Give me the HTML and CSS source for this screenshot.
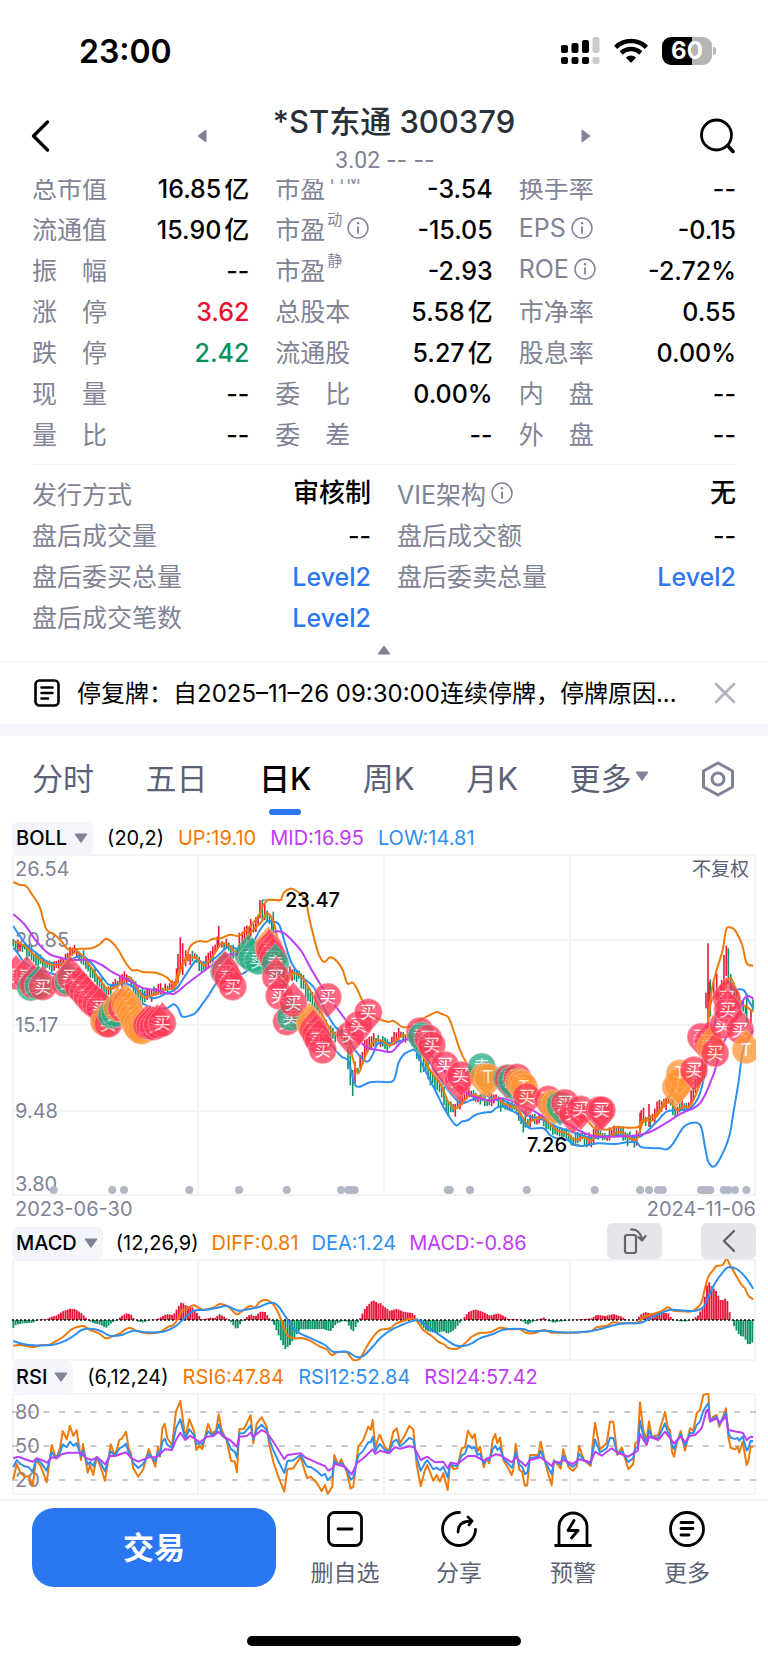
FILE: index.html
```html
<!DOCTYPE html>
<html lang="zh-CN">
<head>
    <meta charset="UTF-8">
    <meta name="viewport" content="width=device-width, initial-scale=1.0">
    <title>*ST东通 300379</title>
    <link rel="stylesheet" href="styles.css">
</head>
<body>
    <div class="status-bar">
        <span class="clock">23:00</span>
        <div class="status-icons">
            <svg width="39" height="28" viewBox="0 0 39 28">
                <g fill="#000">
                    <rect x="0" y="8" width="7" height="8" rx="2"/>
                    <rect x="10.5" y="6" width="7" height="10" rx="2"/>
                    <rect x="21" y="3" width="7" height="13" rx="2"/>
                    <rect x="0" y="20" width="7" height="7" rx="2"/>
                    <rect x="10.5" y="20" width="7" height="7" rx="2"/>
                    <rect x="21" y="20" width="7" height="7" rx="2"/>
                </g>
                <g fill="#ccc">
                    <rect x="31.5" y="0" width="7" height="16" rx="2"/>
                    <rect x="31.5" y="20" width="7" height="7" rx="2"/>
                </g>
            </svg>
            <svg width="34" height="26" viewBox="0 0 34 26">
                <g fill="none" stroke="#000" stroke-width="4.6">
                    <path d="M1.6 9.3 A22 22 0 0 1 32.4 9.3"/>
                    <path d="M7.2 15 A14 14 0 0 1 26.8 15"/>
                </g>
                <path d="M12 19.6 A7.2 7.2 0 0 1 22 19.6 L17.8 24.2 Q17 25 16.2 24.2 Z"/>
            </svg>
            <div class="battery"><span class="battery-level">60</span></div>
        </div>
    </div>

    <header class="header">
        <button class="icon-btn back" aria-label="返回">
            <svg width="20" height="34" viewBox="0 0 20 34"><path d="M16.5 3 L2.5 17 L16.5 31" fill="none" stroke="#000" stroke-width="3.4" stroke-linecap="round" stroke-linejoin="round"/></svg>
        </button>
        <div class="stock-nav">
            <button class="icon-btn" aria-label="上一只">
                <svg width="10" height="14" viewBox="0 0 10 14"><path d="M9 1 V13 L1 7 Z" fill="#7f8395" stroke="#7f8395" stroke-linejoin="round"/></svg>
            </button>
            <div class="stock">
                <h1>*ST东通 300379</h1>
                <p>3.02 <span>-- --</span></p>
            </div>
            <button class="icon-btn" aria-label="下一只">
                <svg width="10" height="14" viewBox="0 0 10 14"><path d="M1 1 V13 L9 7 Z" fill="#7f8395" stroke="#7f8395" stroke-linejoin="round"/></svg>
            </button>
        </div>
        <button class="icon-btn search" aria-label="搜索">
            <svg width="36" height="36" viewBox="0 0 36 36"><g fill="none" stroke="#000" stroke-width="2.8" stroke-linecap="round"><circle cx="16.5" cy="17" r="15"/><path d="M28 28 L33 33.5" stroke-width="3.6"/></g></svg>
        </button>
    </header>

    <main>
        <section class="quote">
            <dl class="grid three">
                <div><dt>总市值</dt><dd>16.85<i>亿</i></dd></div>
                <div><dt>市盈<sup>TTM</sup></dt><dd>-3.54</dd></div>
                <div><dt>换手率</dt><dd>--</dd></div>
                <div><dt>流通值</dt><dd>15.90<i>亿</i></dd></div>
                <div><dt>市盈<sup>动</sup><svg class="info"><use href="#info"/></svg></dt><dd>-15.05</dd></div>
                <div><dt>EPS<svg class="info"><use href="#info"/></svg></dt><dd>-0.15</dd></div>
                <div><dt>振　幅</dt><dd>--</dd></div>
                <div><dt>市盈<sup>静</sup></dt><dd>-2.93</dd></div>
                <div><dt>ROE<svg class="info"><use href="#info"/></svg></dt><dd>-2.72%</dd></div>
                <div><dt>涨　停</dt><dd class="up">3.62</dd></div>
                <div><dt>总股本</dt><dd>5.58<i>亿</i></dd></div>
                <div><dt>市净率</dt><dd>0.55</dd></div>
                <div><dt>跌　停</dt><dd class="down">2.42</dd></div>
                <div><dt>流通股</dt><dd>5.27<i>亿</i></dd></div>
                <div><dt>股息率</dt><dd>0.00%</dd></div>
                <div><dt>现　量</dt><dd>--</dd></div>
                <div><dt>委　比</dt><dd>0.00%</dd></div>
                <div><dt>内　盘</dt><dd>--</dd></div>
                <div><dt>量　比</dt><dd>--</dd></div>
                <div><dt>委　差</dt><dd>--</dd></div>
                <div><dt>外　盘</dt><dd>--</dd></div>
            </dl>
            <dl class="grid two">
                <div><dt>发行方式</dt><dd class="word">审核制</dd></div>
                <div><dt>VIE架构<svg class="info"><use href="#info"/></svg></dt><dd class="word">无</dd></div>
                <div><dt>盘后成交量</dt><dd>--</dd></div>
                <div><dt>盘后成交额</dt><dd>--</dd></div>
                <div><dt>盘后委买总量</dt><dd><a href="#level2">Level2</a></dd></div>
                <div><dt>盘后委卖总量</dt><dd><a href="#level2">Level2</a></dd></div>
                <div><dt>盘后成交笔数</dt><dd><a href="#level2">Level2</a></dd></div>
            </dl>
            <button class="collapse" aria-label="收起">
                <svg width="14" height="10" viewBox="0 0 14 10"><path d="M7 1 L13 9 H1 Z" fill="#7f8395" stroke="#7f8395" stroke-linejoin="round"/></svg>
            </button>
        </section>

        <section class="notice">
            <svg width="26" height="28" viewBox="0 0 26 28"><g fill="none" stroke="#000" stroke-width="2.6" stroke-linecap="round"><rect x="1.5" y="1.5" width="23" height="25" rx="4"/><path d="M7.5 8.5 H18.5 M7.5 14 H18.5 M7.5 19.5 H14"/></g></svg>
            <p>停复牌：自2025–11–26 09:30:00连续停牌，停牌原因...</p>
            <button class="icon-btn" aria-label="关闭">
                <svg width="22" height="22" viewBox="0 0 22 22"><path d="M2 2 L20 20 M20 2 L2 20" fill="none" stroke="#b0b5c3" stroke-width="2.8" stroke-linecap="round"/></svg>
            </button>
        </section>

        <nav class="tabs">
            <button>分时</button>
            <button>五日</button>
            <button class="active">日K</button>
            <button>周K</button>
            <button>月K</button>
            <button>更多<svg width="14" height="11" viewBox="0 0 14 11"><use href="#caret"/></svg></button>
            <button class="settings" aria-label="设置">
                <svg width="34" height="36" viewBox="0 0 34 36"><g fill="none" stroke="#7f8395" stroke-width="3" stroke-linejoin="round"><path d="M17 2 L31.5 10 V26 L17 34 L2.5 26 V10 Z"/><circle cx="17" cy="18" r="6"/></g></svg>
            </button>
        </nav>

        <section class="charts">
            <div class="legend">
                <button class="chip">BOLL<svg class="caret"><use href="#caret"/></svg></button>
                <span>(20,2)</span>
                <span class="orange">UP:19.10</span>
                <span class="purple">MID:16.95</span>
                <span class="blue">LOW:14.81</span>
            </div>
            <svg class="chart" viewBox="0 0 744 342">
                <path class="frame" d="M1 1 H743 V341 H1 Z M186 0 V342 M372 0 V342 M558 0 V342 M0 86 H744 M0 171 H744 M0 257 H744"/>
                <g class="axis">
                    <text x="3" y="22">26.54</text>
                    <text x="3" y="93">20.85</text>
                    <text x="3" y="178">15.17</text>
                    <text x="3" y="264">9.48</text>
                    <text x="3" y="337">3.80</text>
                    <text class="adjust" x="737" y="22" text-anchor="end">不复权</text>
                </g>
                <path d="M250 46 H270 M559 291 H568" stroke="#555"/>
                <g id="candles"></g>
                <g id="boll" class="lines"></g>
                <g class="extreme">
                    <text x="273" y="53">23.47</text>
                    <text x="555" y="298" text-anchor="end">7.26</text>
                </g>
                <g id="pins"></g>
                <g id="events" fill="#b3b8c7"></g>
            </svg>
            <div class="dates"><span>2023-06-30</span><span>2024-11-06</span></div>

            <div class="legend tall">
                <button class="chip">MACD<svg class="caret"><use href="#caret"/></svg></button>
                <span>(12,26,9)</span>
                <span class="orange">DIFF:0.81</span>
                <span class="blue">DEA:1.24</span>
                <span class="purple">MACD:-0.86</span>
                <div class="tools">
                    <button aria-label="横屏">
                        <svg width="24" height="26" viewBox="0 0 24 26"><g fill="none" stroke="#666" stroke-width="2.2" stroke-linecap="round" stroke-linejoin="round"><rect x="2" y="7" width="11" height="18" rx="2"/><path d="M8 1.5 C14 1 18 5 19 12 M15.5 9 L19 12.5 L22.5 8"/></g></svg>
                    </button>
                    <button aria-label="展开">
                        <svg width="14" height="24" viewBox="0 0 14 24"><path d="M12 2 L2 12 L12 22" fill="none" stroke="#666" stroke-width="2.4" stroke-linecap="round"/></svg>
                    </button>
                </div>
            </div>
            <svg class="chart" viewBox="0 0 744 102">
                <path class="frame" d="M1 1 H743 V101 H1 Z M186 0 V102 M372 0 V102 M558 0 V102"/>
                <g id="macd-bars"></g>
                <path d="M0 61 H744" stroke="#000" stroke-width="1.5" stroke-dasharray="2 2"/>
                <g id="macd" class="lines"></g>
            </svg>

            <div class="legend">
                <button class="chip">RSI<svg class="caret"><use href="#caret"/></svg></button>
                <span>(6,12,24)</span>
                <span class="orange">RSI6:47.84</span>
                <span class="blue">RSI12:52.84</span>
                <span class="purple">RSI24:57.42</span>
            </div>
            <svg class="chart" viewBox="0 0 744 102">
                <path class="frame" d="M1 1 H743 V101 H1 Z M186 0 V102 M372 0 V102 M558 0 V102"/>
                <path d="M0 19 H744 M0 53 H744 M0 87 H744" stroke="#b4b8c4" stroke-width="1.5" stroke-dasharray="6 9.7"/>
                <g class="axis">
                    <text x="3" y="26">80</text>
                    <text x="3" y="60">50</text>
                    <text x="3" y="94">20</text>
                </g>
                <g id="rsi" class="lines"></g>
            </svg>
        </section>
    </main>

    <footer class="bottom-bar">
        <button class="trade">交易</button>
        <button class="action">
            <svg width="38" height="36" viewBox="0 0 38 36"><g fill="none" stroke="#000" stroke-width="2.8" stroke-linecap="round"><rect x="2.5" y="1.5" width="33" height="33" rx="6"/><path d="M12 18 H26"/></g></svg>
            删自选
        </button>
        <button class="action">
            <svg width="38" height="36" viewBox="0 0 38 36"><g fill="none" stroke="#000" stroke-width="2.8" stroke-linecap="round" stroke-linejoin="round"><path d="M19.5 1.5 A16.5 16.5 0 1 0 35.5 18.5"/><path d="M18 21 C18 14 22 10 31.5 10 M28 6 L32 10 L29 14"/></g></svg>
            分享
        </button>
        <button class="action">
            <svg width="38" height="36" viewBox="0 0 38 36"><g fill="none" stroke="#000" stroke-width="2.8" stroke-linecap="round" stroke-linejoin="round"><path d="M1.5 34.5 H36.5 M5 34 V16 A14 14 0 0 1 33 16 V34"/><path d="M20 9.5 L14 19.5 H24 L17.5 27"/></g></svg>
            预警
        </button>
        <button class="action">
            <svg width="38" height="36" viewBox="0 0 38 36"><g fill="none" stroke="#000" stroke-width="2.8" stroke-linecap="round"><circle cx="19" cy="18" r="16.5"/><path d="M13 11.5 H25 M13 17.5 H25 M13 24 H21"/></g></svg>
            更多
        </button>
    </footer>
    <div class="home-indicator"></div>

    <svg class="symbols">
        <symbol id="info" viewBox="0 0 22 22"><circle cx="11" cy="11" r="10" fill="none" stroke="#7f8395" stroke-width="1.5"/><path d="M11 9.5 V16.5" stroke="#7f8395" stroke-width="1.8"/><circle cx="11" cy="6.3" r="1.2" fill="#7f8395"/></symbol>
        <symbol id="caret" viewBox="0 0 14 11"><path d="M1 1 H13 L7 9.5 Z" fill="#7f8395" stroke="#7f8395" stroke-linejoin="round"/></symbol>
    </svg>

    <script src="charts.js"></script>
</body>
</html>
```
FILE: styles.css
```css
* {
    margin: 0;
    padding: 0;
    box-sizing: border-box;
}

body {
    background-color: #fff;
    color: #000;
    font-family: Inter, "Noto Sans CJK SC", sans-serif;
    font-size: 24px;
}

button {
    border: none;
    background: none;
    font: inherit;
    color: inherit;
    cursor: pointer;
}

svg {
    display: block;
}

/* status bar */
.status-bar {
    display: flex;
    justify-content: space-between;
    align-items: center;
    height: 102px;
    padding: 0 51px 0 79px;
}

.clock {
    font-size: 32px;
    font-weight: 600;
}

.status-icons {
    display: flex;
    align-items: center;
    gap: 14px;
}

.battery {
    position: relative;
    width: 50px;
    margin-right: 5px;
    border-radius: 9px;
    background: linear-gradient(to right, #000 60%, #b5b5b5 60%);
    color: #fff;
    text-align: center;
}

.battery::after {
    content: "";
    position: absolute;
    left: 51px;
    top: 10px;
    width: 3px;
    height: 8px;
    border-radius: 0 3px 3px 0;
    background-color: #b5b5b5;
}

.battery-level {
    display: block;
    font-size: 24px;
    font-weight: 700;
    line-height: 28px;
}

/* header */
.header {
    display: flex;
    align-items: flex-start;
    height: 77px;
    padding: 0 32px 0 31px;
}

.icon-btn {
    display: flex;
    align-items: center;
    height: 68px;
}

.back {
    width: 57px;
}

.search {
    width: 36px;
}

.stock-nav {
    display: flex;
    justify-content: space-between;
    width: 394px;
    max-width: 60%;
    margin: 0 auto;
}

.stock {
    text-align: center;
}

.stock h1 {
    font-size: 31px;
    font-weight: 500;
    line-height: 40px;
    color: #2a3038;
}

.stock p {
    padding-right: 18px;
    font-family: Roboto, sans-serif;
    font-size: 23px;
    line-height: 36px;
    color: #7f8395;
}

.stock p span {
    font-family: Inter, sans-serif;
}

/* quote numbers, scrolled a little under the header */
.quote {
    overflow: hidden;
    padding: 0 32px;
}

.grid {
    display: grid;
    column-gap: 26px;
}

.three {
    grid-template-columns: repeat(3, 1fr);
    margin-top: -11px;
    padding-bottom: 9px;
    border-bottom: 1px solid #f4f4f7;
}

.two {
    grid-template-columns: repeat(2, 1fr);
    padding-top: 9px;
}

.grid div {
    display: flex;
    justify-content: space-between;
    align-items: center;
    height: 41px;
    white-space: nowrap;
}

dt {
    display: flex;
    align-items: center;
    padding-bottom: 3px;
    font-size: 25px;
    color: #7f8395;
}

dt sup {
    align-self: flex-start;
    margin-left: 2px;
    font-size: 15px;
    line-height: 20px;
}

dd {
    font-size: 25px;
    font-weight: 500;
    line-height: 30px;
}

dd i {
    margin-left: 3px;
    font-style: normal;
}

dd a {
    color: #2b76f1;
    text-decoration: none;
}

.word {
    padding-bottom: 3px;
    font-size: 26px;
}

.info {
    width: 22px;
    height: 22px;
    margin-left: 5px;
}

.up {
    color: #ea1034;
}

.down {
    color: #06905f;
}

.collapse {
    display: flex;
    justify-content: center;
    align-items: center;
    width: 100%;
    height: 23px;
}

/* notice */
.notice {
    display: flex;
    align-items: center;
    height: 75px;
    padding: 0 32px 0 34px;
    border-top: 1px solid #f0f1f6;
    border-bottom: 12px solid #f4f5fa;
}

.notice p {
    flex: 1;
    margin-left: 17px;
    padding-bottom: 4px;
    font-size: 24px;
    white-space: nowrap;
}

/* period tabs */
.tabs {
    display: flex;
    justify-content: space-between;
    height: 86px;
    padding: 18px 33px 18px 32px;
}

.tabs button {
    display: flex;
    align-items: center;
    gap: 4px;
    height: 50px;
    padding-bottom: 6px;
    font-size: 31px;
    color: #5c6177;
}

.tabs .settings {
    padding-bottom: 0;
}

.tabs .active {
    position: relative;
    font-weight: 500;
    color: #000;
}

.tabs .active::after {
    content: "";
    position: absolute;
    left: 50%;
    bottom: -11px;
    width: 32px;
    height: 6px;
    margin-left: -16px;
    border-radius: 3px;
    background-color: #2b76f1;
}

/* charts */
.charts {
    padding: 0 12px 4px;
}

.legend {
    display: flex;
    align-items: flex-end;
    gap: 14px;
    font-size: 20px;
    line-height: 32px;
    white-space: nowrap;
}

.tall {
    gap: 13px;
    height: 36px;
}

.chip {
    display: flex;
    align-items: center;
    gap: 7px;
    padding: 0 5px 0 4px;
    border-radius: 6px;
    background-color: #f4f5fa;
    font-weight: 500;
}

.caret {
    width: 14px;
    height: 11px;
}

.tools {
    display: flex;
    gap: 39px;
    margin-left: auto;
}

.tools button {
    display: flex;
    justify-content: center;
    align-items: center;
    width: 55px;
    height: 36px;
    border-radius: 6px;
    background-color: #e5e6ea;
}

.orange {
    color: #f07800;
}

.purple {
    color: #c03cf4;
}

.blue {
    color: #2f8ff0;
}

.chart {
    width: 100%;
    height: auto;
}

.frame {
    fill: none;
    stroke: #f3f3fa;
    stroke-width: 2;
}

.axis {
    font-size: 20px;
    fill: #7f8395;
}

.adjust {
    font-size: 19px;
    fill: #5c6177;
}

.extreme {
    font-size: 20px;
    font-weight: 500;
}

.lines {
    fill: none;
    stroke-width: 2;
    stroke-linejoin: round;
}

#pins {
    font-size: 17px;
    text-anchor: middle;
    fill: #fff;
}

.dates {
    display: flex;
    justify-content: space-between;
    padding-left: 3px;
    font-size: 20px;
    line-height: 27px;
    color: #7f8395;
}

/* bottom bar */
.bottom-bar {
    display: flex;
    height: 137px;
    padding: 7px 24px 0 32px;
    border-top: 2px solid #f4f5f9;
}

.trade {
    width: 244px;
    height: 79px;
    margin-right: 12px;
    padding-bottom: 4px;
    border-radius: 22px;
    background-color: #2b76f1;
    color: #fff;
    font-size: 31px;
    font-weight: 600;
}

.action {
    display: flex;
    flex: 1;
    flex-direction: column;
    align-items: center;
    gap: 9px;
    height: 84px;
    padding-top: 3px;
    font-size: 23px;
    line-height: 34px;
    color: #5c6177;
}

.home-indicator {
    width: 274px;
    height: 10px;
    margin: 0 auto 17px;
    border-radius: 5px;
    background-color: #000;
}

.symbols {
    display: none;
}
```
FILE: charts.js
```js
// Series are stored at 3 units per chart pixel, in two halves of 1140 units.
const HALF = 1140;
const ORANGE = '#ee7a0c';
const BLUE = '#2f8ff0';
const PURPLE = '#bd3ff5';
const RED = '#e8173a';
const GREEN = '#0b9465';

function parse(text, shift) {
    return text.trim().split(/\s+/).map(pair => {
        const [x, y] = pair.split(',').map(Number);
        return [x + shift, y];
    });
}

function series(left, right) {
    return parse(left, 0).concat(parse(right, HALF));
}

function at(points, x) {
    for (let i = 1; i < points.length; i++) {
        if (x <= points[i][0]) {
            const [x0, y0] = points[i - 1];
            const [x1, y1] = points[i];
            return y0 + (y1 - y0) * Math.max(0, x - x0) / (x1 - x0);
        }
    }
    return points[points.length - 1][1];
}

function px(x) {
    return x / 3 - 12;
}

function line(id, points, top, color, smooth) {
    const p = points.map(([x, y]) => [px(x), y / 3 - top]);
    let d = 'M' + p[0][0].toFixed(1) + ' ' + p[0][1].toFixed(1);
    for (let i = 1; i < p.length; i++) {
        if (smooth) {
            const a = p[Math.max(0, i - 2)], b = p[i - 1], c = p[i], e = p[Math.min(p.length - 1, i + 1)];
            const c1 = [b[0] + (c[0] - a[0]) / 6, b[1] + (c[1] - a[1]) / 6];
            const c2 = [c[0] - (e[0] - b[0]) / 6, c[1] - (e[1] - b[1]) / 6];
            d += ' C' + [...c1, ...c2, ...c].map(v => v.toFixed(1)).join(' ');
        } else {
            d += ' L' + p[i][0].toFixed(1) + ' ' + p[i][1].toFixed(1);
        }
    }
    document.getElementById(id).innerHTML += `<path d="${d}" stroke="${color}"/>`;
}

// ---- BOLL ----
const up = series(
    '40,96 58,104 78,108 95,132 118,168 130,210 140,240 165,255 185,275 205,298 235,296 275,295 300,282 318,266 335,276 355,300 375,335 395,360 412,360 430,366 470,369 500,382 515,398 525,404 532,375 545,345 560,318 570,290 585,277 600,273 620,275 640,266 665,264 690,254 715,258 740,240 765,212 780,190 790,165 805,150 825,150 842,150 852,128 870,116 885,120 905,135 918,155 928,205 940,255 955,310 972,336 990,322 1010,333 1028,360 1042,400 1058,398 1070,415 1085,448 1100,475 1120,500',
    '5,510 25,516 38,512 50,518 65,530 80,532 100,525 130,505 150,495 170,486 185,492 205,502 220,540 240,600 260,640 290,680 330,690 370,680 420,670 470,730 510,745 560,775 600,800 625,815 640,832 660,838 690,838 700,832 720,832 773,832 782,815 800,805 820,798 840,780 855,750 870,735 885,700 910,690 940,700 965,690 975,640 985,520 995,420 1010,360 1028,300 1038,240 1048,232 1062,238 1075,258 1088,290 1100,340 1120,347');
const mid = series(
    '40,193 75,225 110,275 145,310 185,324 215,330 270,330 305,345 340,368 385,390 430,415 470,420 500,430 525,430 560,402 600,372 650,335 680,314 715,312 740,300 790,262 825,245 848,247 870,265 905,305 935,360 975,425 1000,460 1030,500 1050,530 1080,575 1105,594',
    '5,602 35,605 60,580 80,568 110,575 150,610 190,660 240,710 270,735 300,745 330,752 365,745 400,755 430,770 460,782 490,800 520,810 560,820 600,843 640,858 690,860 773,856 810,846 840,830 870,812 890,798 915,785 940,775 960,760 975,735 990,700 1005,660 1020,600 1040,560 1060,520 1080,480 1090,450 1105,438 1120,446');
const low = series(
    '40,293 55,312 70,335 90,350 120,360 160,372 200,385 240,400 280,420 320,440 380,450 430,462 460,475 500,475 520,463 535,475 547,500 575,495 590,485 610,458 630,430 645,405 660,385 700,380 730,370 760,350 800,330 820,340 850,420 870,480 900,520 930,535 960,560 990,580 1010,605 1025,620 1045,632 1055,670 1065,705 1080,710 1110,697',
    '0,695 40,692 55,640 70,615 85,605 105,600 118,625 130,650 150,690 170,730 190,770 208,800 228,826 245,815 265,810 285,795 310,788 335,785 350,773 370,768 390,780 410,790 430,815 450,835 490,835 510,855 530,865 560,868 585,885 610,888 655,880 705,882 740,877 770,877 785,892 840,895 860,898 880,880 910,832 938,818 962,828 975,890 985,935 1005,948 1035,895 1050,850 1060,790 1075,700 1090,600 1120,541');
const fast = series(
    '40,275 70,285 100,312 130,335 160,345 190,340 210,318 230,306 250,320 275,355 300,390 320,415 340,415 365,398 388,382 405,405 430,440 460,435 490,420 520,415 530,400 545,350 565,325 590,325 610,345 625,335 645,308 665,280 685,285 705,305 720,305 740,260 765,235 785,215 800,190 820,215 840,300 860,390 880,370 905,380 935,430 970,500 1000,550 1030,555 1045,570 1060,630 1075,670 1095,620 1120,575',
    '5,572 30,585 65,558 90,560 120,600 150,660 180,700 205,755 228,775 250,755 270,735 300,740 320,752 350,745 380,765 410,775 440,820 460,810 490,805 530,840 560,850 585,870 610,862 635,872 650,850 680,862 720,845 740,860 770,868 790,815 820,810 850,770 870,755 890,780 910,770 930,768 955,715 975,650 985,500 1000,440 1020,440 1048,385 1065,410 1085,460 1100,470 1120,485');
const slow = series(
    '40,228 75,280 110,310 150,340 190,340 240,318 270,335 310,385 330,405 380,402 420,425 460,445 500,430 530,415 560,370 590,330 615,340 650,320 685,290 715,298 750,290 780,240 800,215 820,215 838,225 855,280 875,340 905,380 940,410 970,470 1005,530 1040,560 1065,600 1100,635 1120,610',
    '-5,580 40,580 80,568 110,590 150,640 190,700 225,745 245,760 280,748 320,738 350,750 380,755 420,780 450,800 490,810 530,830 560,840 600,855 640,865 680,858 730,856 775,862 800,845 830,815 860,785 890,780 930,775 960,730 980,640 1000,540 1020,460 1050,425 1090,420 1105,450 1120,475');

// wide days that stand out of the average: x, high, low, colour
const spikes = [
    [534, 312, 400, RED], [541, 262, 360, RED], [548, 280, 375, RED], [656, 228, 285, RED], [718, 248, 300, RED], [752, 207, 260, RED],
    [780, 150, 205, RED], [787, 150, 215, GREEN], [794, 160, 210, RED], [820, 185, 250, GREEN],
    [1044, 590, 658, GREEN], [1051, 600, 706, GREEN], [1058, 660, 738, GREEN], [1065, 635, 700, RED],
    [1262, 600, 668, GREEN], [1345, 757, 800, GREEN], [1576, 780, 833, GREEN], [1920, 788, 850, RED],
    [1947, 762, 830, RED], [2118, 428, 475, RED], [2124, 280, 500, RED], [2131, 388, 500, GREEN],
    [2150, 370, 450, RED], [2165, 390, 460, RED], [2172, 315, 430, RED], [2179, 287, 378, RED],
    [2185, 295, 400, GREEN], [2192, 372, 430, GREEN], [2240, 430, 520, GREEN], [2253, 480, 520, RED], [2259, 448, 480, GREEN]
];

function candle(x, high, low, color) {
    return `<rect x="${(px(x) - 0.8).toFixed(1)}" y="${(high / 3 - 4).toFixed(1)}" width="1.6" height="${((low - high) / 3).toFixed(1)}" fill="${color}"/>`;
}

let candles = '';
let seed = 7;
function random() {
    seed = (seed * 1103515245 + 12345) % 2147483648;
    return seed / 2147483648;
}
for (let x = 40; x < 2262; x += 6.8) {
    if (spikes.some(s => Math.abs(s[0] - x) < 3.4)) continue;
    const slope = at(fast, x + 7) - at(fast, x - 7);
    const center = at(fast, x) + slope * 0.6 + (random() - 0.5) * 16;
    const size = 7 + random() * 12 + Math.min(12, Math.abs(slope) * 0.3);
    const color = slope + (random() - 0.5) * 20 > 0 ? GREEN : RED;
    candles += candle(x, center - size, center + size, color);
}
spikes.forEach(s => candles += candle(...s));
document.getElementById('candles').innerHTML = candles;

line('boll', slow, 4, BLUE, true);
line('boll', fast, 4, ORANGE, true);
line('boll', up, 4, ORANGE, true);
line('boll', low, 4, BLUE, true);
line('boll', mid, 4, PURPLE, true);

// ---- trade pins: B buy, S sell, T same-day; ^ tip on top, v tip below ----
const pins = {
    '^': [
        'B48,378 B80,380 S92,412 B100,405 S115,408 B128,410 B195,400 S205,395 B212,382 B235,410 B250,425 B262,440 B275,455 B288,465 B300,475',
        'B318,520 T312,515 B325,522 S335,495 S345,490 T352,475 B365,475 T376,463 T385,472 T390,485 T397,500 T403,515 T410,528 T417,538 T425,542 B440,527 B450,528 B460,530 B472,525 B487,520',
        'S672,365 B676,365 B685,385 B698,410 S745,315 S757,325 S775,333 T805,292 B808,300 B812,310 B820,325 S826,342 B828,382 B838,438 B860,515 S872,502 B880,460',
        'T930,520 T933,528 B940,540 B948,555 B955,570 B968,600',
        'B2125,575 T2132,590 B2145,610 B2170,525 B2180,445 B2183,480 B2220,540 T2238,600'
    ],
    'v': [
        'B983,440 B1050,555 B1075,525 B1105,487 B1260,543 S1265,557 B1285,565 B1295,585 B1335,645 B1375,690 B1382,675',
        'S1445,650 T1452,680 T1465,682 S1520,685 B1525,685 S1535,690 B1552,682 T1557,695 T1565,702 T1572,712 B1580,740',
        'B1645,748 T1655,760 T1665,762 S1680,765 B1695,758 B1718,790 B1742,778 B1798,780 B1805,780',
        'T2028,710 T2035,700 T2040,670 B2082,660 B2103,560'
    ]
};
const kinds = {
    B: ['#ff3656', '买'],
    S: ['#1fae84', '卖'],
    T: ['#ff9530', 'T']
};
let marks = '';
['v', '^'].forEach(dir => {
    const flip = dir === '^' ? 1 : -1;
    pins[dir].join(' ').split(' ').forEach(pin => {
        const [x, y] = pin.slice(1).split(',').map(Number);
        const [color, label] = kinds[pin[0]];
        marks += `<g transform="translate(${px(x).toFixed(1)} ${(y / 3 - 4).toFixed(1)})" opacity="0.75">`
            + `<path transform="scale(1 ${flip})" d="M0 -21 L10 -10 A14 14 0 1 1 -10 -10 Z" fill="${color}" stroke="#ffc9c9" stroke-width="0.6"/>`
            + `<text y="6">${label}</text></g>`;
    });
});
document.getElementById('pins').innerHTML = marks;

const events = [161, 337, 372, 568, 717, 860, 1023, 1045, 1052, 1064, 1343, 1349, 1410, 1580, 1784, 1920, 1947, 1974, 1988, 2103, 2110, 2117, 2124, 2131, 2171, 2185, 2205, 2239];
document.getElementById('events').innerHTML = events.map(x => `<circle cx="${px(x).toFixed(1)}" cy="336" r="4"/>`).join('');

// ---- MACD ----
const diff = series(
    '40,407 60,405 100,411 120,406 148,404 165,395 190,380 215,358 235,350 252,349 270,360 285,365 300,372 318,385 340,378 360,370 380,356 392,354 410,363 440,370 480,366 505,350 520,345 535,325 545,302 560,298 580,286 610,299 640,293 660,282 685,290 710,313 730,300 750,288 765,292 780,275 797,269 812,276 825,290 838,315 850,350 862,375 880,385 905,384 930,392 960,410 980,418 995,435 1012,427 1040,427 1060,450 1080,445 1100,410 1120,380',
    '0,360 30,355 50,340 85,328 100,326 112,335 130,360 155,378 175,395 195,405 205,414 232,416 255,400 275,380 300,369 330,367 360,353 390,358 420,358 440,369 465,369 490,360 515,368 560,368 600,367 635,362 650,352 680,347 700,337 730,340 775,337 785,325 800,318 840,305 865,292 880,302 910,304 935,304 955,290 965,275 975,235 985,200 1000,180 1010,168 1028,165 1040,147 1050,165 1070,200 1085,225 1095,235 1105,257 1120,268');
const dea = series(
    '40,393 70,402 100,406 155,405 190,395 220,378 245,360 270,356 300,362 330,377 365,375 400,362 440,367 490,365 525,350 550,328 580,303 610,300 645,295 680,288 715,302 750,297 780,290 805,280 825,280 840,295 860,325 880,355 900,370 940,388 975,405 1000,425 1040,425 1070,441 1090,438 1120,408',
    '0,385 30,362 65,345 100,332 120,333 160,362 200,390 225,406 250,408 275,400 300,385 340,372 370,359 430,357 450,364 500,362 540,367 600,367 650,360 720,341 780,339 820,320 870,300 940,303 970,292 985,260 1005,220 1030,185 1045,172 1070,177 1095,200 1120,236');
const bars = series(
    '38,-27 48,-14 70,-10 100,-8 112,0 125,3 135,0 150,8 170,14 190,27 210,34 225,33 245,20 262,2 275,-8 300,-14 318,-24 335,-8 350,0 365,12 378,20 392,18 402,4 412,-4 430,-8 445,0 470,2 485,10 500,18 520,15 535,40 545,54 560,42 575,40 590,22 605,2 615,3 630,7 645,6 658,18 675,8 690,-3 710,-30 725,-5 735,5 752,18 765,10 780,25 795,24 810,3 820,-10 835,-45 855,-88 870,-75 885,-50 900,-28 970,-27 990,-35 1010,-10 1030,-3 1040,-5 1058,-37 1070,-15 1080,5 1095,35 1118,60 1135,50',
    '0,52 10,42 30,27 50,34 70,25 100,20 112,2 120,-12 140,-33 170,-40 190,-33 203,-42 225,-28 240,-8 250,5 265,24 285,32 310,24 330,13 355,20 375,10 385,2 400,3 425,0 440,-15 465,-3 490,8 505,-2 520,-8 545,-4 570,0 595,2 635,5 650,16 675,12 700,18 725,10 740,0 770,0 780,15 795,24 810,20 850,22 865,20 875,5 888,-2 915,-5 935,0 955,15 968,40 978,90 984,120 995,100 1010,85 1020,60 1030,60 1040,68 1047,30 1055,0 1065,-25 1080,-48 1092,-50 1105,-76 1120,-65');

let columns = '';
for (let x = 40; x < 2262; x += 6.8) {
    const h = at(bars, x) / 3;
    columns += `<rect x="${(px(x) - 0.9).toFixed(1)}" y="${(h > 0 ? 61 - h : 61).toFixed(1)}" width="1.9" height="${Math.abs(h).toFixed(1)}" fill="${h > 0 ? RED : GREEN}"/>`;
}
document.getElementById('macd-bars').innerHTML = columns;
line('macd', diff, 49, ORANGE, true);
line('macd', dea, 49, BLUE, true);

// ---- RSI ----
const rsi6 = series(
    '40,808 50,762 62,790 75,800 85,798 98,828 108,750 122,768 140,817 155,705 168,745 180,715 188,663 200,688 210,648 220,678 230,660 243,750 249,702 263,788 270,765 280,795 290,740 302,772 315,812 332,703 345,738 358,690 366,685 378,665 386,715 392,728 400,775 415,800 430,778 446,717 466,770 474,710 480,740 487,655 494,641 502,685 516,705 528,605 541,573 556,683 568,628 583,665 589,720 598,706 607,718 624,642 636,670 648,662 656,613 665,660 680,692 693,752 704,755 711,787 718,657 732,656 752,616 760,700 770,640 785,622 800,650 808,705 820,755 835,800 853,845 862,778 880,775 902,740 915,785 922,805 932,800 950,818 965,843 975,825 983,852 997,830 1003,735 1015,765 1024,748 1040,785 1052,836 1060,830 1075,710 1090,690 1105,650 1112,660 1118,630 1126,713 1138,675',
    '0,675 15,712 27,722 40,665 50,655 60,700 75,675 88,648 100,658 110,765 122,828 135,780 142,765 160,812 170,795 180,815 190,790 203,840 210,760 220,778 232,775 245,715 255,712 264,662 277,685 284,672 292,725 300,710 311,772 320,745 328,760 338,690 346,672 352,700 360,683 370,750 385,775 395,795 400,780 407,702 418,780 426,785 435,828 442,825 450,735 475,735 482,695 495,755 507,800 515,826 522,750 542,776 550,718 565,770 578,782 590,770 597,708 612,750 632,768 638,700 645,638 660,718 680,700 690,635 700,635 712,735 725,712 745,778 760,762 766,700 773,695 780,577 790,660 800,690 807,634 815,680 835,675 855,606 864,655 870,660 876,725 882,740 890,700 902,663 915,722 930,655 940,662 950,610 960,600 970,555 985,550 990,632 1000,620 1010,615 1018,650 1038,595 1045,680 1052,713 1065,718 1073,710 1078,728 1088,695 1100,765 1105,755 1112,710 1120,710');
const rsi24 = series(
    '40,745 55,740 75,748 98,755 110,745 125,750 142,758 155,742 170,745 185,733 205,728 240,728 260,745 275,750 292,742 315,763 330,738 345,738 378,727 395,745 415,755 446,742 470,742 495,718 516,720 528,690 541,668 556,690 570,677 600,697 620,680 640,678 656,665 670,680 690,690 711,710 718,680 740,678 752,668 760,680 785,660 800,668 820,695 853,748 862,735 902,730 915,742 950,758 975,768 985,782 997,775 1005,762 1035,770 1055,793 1070,760 1090,745 1118,718 1126,732',
    '0,722 27,730 45,712 60,716 88,709 102,712 122,750 142,740 165,757 190,755 203,775 212,758 232,762 264,738 285,738 311,752 346,733 360,735 395,757 407,742 437,768 450,750 482,742 515,768 522,755 540,757 550,750 578,762 597,748 632,757 645,725 665,737 695,715 712,728 745,740 773,722 780,672 800,705 807,680 835,690 855,665 882,700 902,680 915,697 930,678 945,675 965,655 980,600 985,600 990,635 1010,625 1020,640 1038,618 1045,660 1070,665 1088,668 1100,690 1112,680 1120,682');
const rsi12 = rsi6.map(([x, y]) => [x, y * 0.42 + at(rsi24, x) * 0.58]);

line('rsi', rsi6, 183, ORANGE, false);
line('rsi', rsi12, 183, BLUE, false);
line('rsi', rsi24, 183, PURPLE, false);
```
